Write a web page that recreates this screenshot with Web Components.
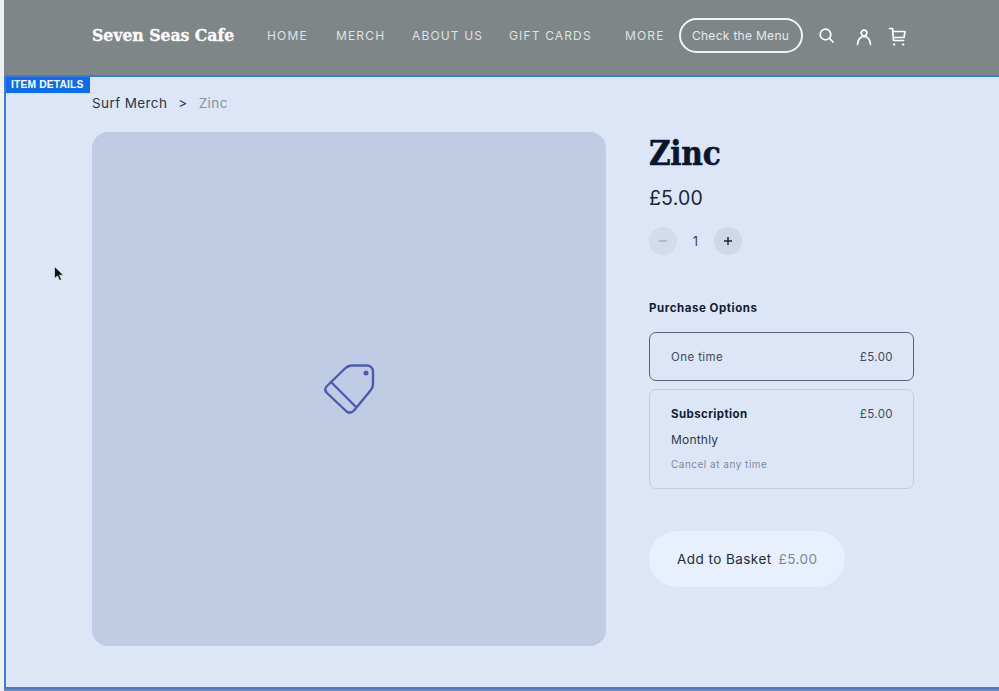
<!DOCTYPE html>
<html lang="en">
<head>
<meta charset="utf-8">
<title>Zinc</title>
<style>
html, body { margin: 0; height: 100%; background: #eef0f2; }
body { font-family: Inter, "Liberation Sans", sans-serif; overflow: hidden; }
</style>
</head>
<body>
<cafe-page>
  <cafe-header slot="header"></cafe-header>
  <item-details>
    <cafe-breadcrumb slot="crumb"></cafe-breadcrumb>
    <product-image slot="image"></product-image>
    <product-info slot="info">
      <quantity-picker slot="qty"></quantity-picker>
      <purchase-option slot="options" selected>
        <span slot="name">One time</span>
        <span slot="price">£5.00</span>
      </purchase-option>
      <purchase-option slot="options" subscription>
        <span slot="name">Subscription</span>
        <span slot="price">£5.00</span>
        <span slot="period">Monthly</span>
        <span slot="note">Cancel at any time</span>
      </purchase-option>
    </product-info>
  </item-details>
</cafe-page>
<script>
'use strict'
const define = (tag, html) => {
  const template = document.createElement('template')
  template.innerHTML = html
  customElements.define(tag, class extends HTMLElement {
    constructor() {
      super()
      this.attachShadow({mode: 'open'})
      this.shadowRoot.appendChild(template.content.cloneNode(true))
    }
  })
}

define('cafe-page', `
<style>
:host {
  display: grid;
  grid-template-rows: 75px 614px;
  height: 691px;
  padding-left: 4px;
  box-sizing: border-box;
  background: linear-gradient(#eef0f2, #eef0f2) left / 4px 100% no-repeat, #7f8688;
}
svg.cursor { position: absolute; left: 53px; top: 265px; }
</style>
<slot name="header"></slot>
<slot></slot>
<svg class="cursor" width="11" height="18" viewBox="0 0 11 18"><path d="M1.5 1.5v12l3-2.6 2 4.6 2-.9-2-4.4h4z" fill="#111" stroke="#e8eef8" stroke-width=".7"/></svg>
`)

define('cafe-header', `
<style>
:host {
  display: flex;
  align-items: center;
  padding: 0 0 4px 88px;
  background: #7f8688;
  color: #fff;
  box-sizing: border-box;
}
.logo {
  font: 700 17.5px "DejaVu Serif", "Liberation Serif", serif;
  font-stretch: condensed;
  letter-spacing: -.05px;
  -webkit-text-stroke: .3px #fff;
  width: 175px;
  margin-top: -2px;
  white-space: nowrap;
}
nav { display: flex; font-size: 12px; letter-spacing: 1.15px; color: #dde1e3; }
nav span { white-space: nowrap; }
.menu {
  margin-left: 14px;
  width: 120px;
  height: 31px;
  border: 2px solid #f2f4f5;
  border-radius: 18px;
  display: flex;
  align-items: center;
  justify-content: center;
  font-size: 12px;
  letter-spacing: .3px;
  color: #e6e9ea;
}
svg { display: block; fill: none; stroke: #fff; stroke-width: 1.7; stroke-linecap: round; stroke-linejoin: round; }
.search { margin-left: 15px; }
.user { margin-left: 20px; }
.cart { margin-left: 15px; }
</style>
<div class="logo">Seven Seas Cafe</div>
<nav>
  <span style="width:69px">HOME</span>
  <span style="width:76px">MERCH</span>
  <span style="width:97px">ABOUT US</span>
  <span style="width:116px">GIFT CARDS</span>
  <span>MORE</span>
</nav>
<div class="menu">Check the Menu</div>
<svg class="search" width="17" height="17" viewBox="0 0 17 17"><circle cx="7.5" cy="7.5" r="5.300"/><path d="M11.500 11.500 15 15"/></svg>
<svg class="user" width="18" height="20" viewBox="0 0 18 20"><circle cx="9" cy="7" r="2.800"/><path d="M2.500 18.500c.5-5 3-8 6.500-8s6 3 6.500 8"/></svg>
<svg class="cart" width="18" height="20" viewBox="0 0 18 20"><path d="M1.500 2.500h3l1 12h10"/><path d="M5 5.500h12l-1 6H5.500"/><path d="M6 18.500h.4M15 18.500h.4" stroke-width="2"/></svg>
`)

define('item-details', `
<style>
:host {
  display: block;
  position: relative;
  background: #dce6f6;
  border: 2px solid #3a7bdc;
  border-right: 0;
  box-sizing: border-box;
  color: #111c33;
}
.tag {
  position: absolute;
  left: 0;
  top: 0;
  height: 16px;
  padding: 0 5px;
  width: 84px;
  box-sizing: border-box;
  background: #0b6cf2;
  color: #fff;
  font: 700 10.300px/16px "Liberation Sans", sans-serif;
  letter-spacing: .15px;
  white-space: nowrap;
}
.wrap { padding: 16px 0 0 86px; }
.cols { display: flex; margin-top: 20px; }
</style>
<div class="tag">ITEM DETAILS</div>
<div class="wrap">
  <slot name="crumb"></slot>
  <div class="cols">
    <slot name="image"></slot>
    <slot name="info"></slot>
  </div>
</div>
`)

define('cafe-breadcrumb', `
<style>
:host { display: flex; height: 19px; align-items: center; font-size: 13.500px; letter-spacing: .4px; color: #2b3648; white-space: nowrap; }
b { font-weight: 400; margin: 0 11px; }
span { color: #8792a5; }
</style>
Surf Merch <b>&gt;</b> <span>Zinc</span>
`)

define('product-image', `
<style>
:host {
  display: flex;
  width: 514px;
  height: 514px;
  align-items: center;
  justify-content: center;
  background: #c0cce3;
  border-radius: 16px;
}
</style>
<svg width="56" height="56" viewBox="0 0 56 56" fill="none" stroke="#4c5bb0" stroke-width="2.400" stroke-linecap="round" stroke-linejoin="round">
  <path d="M30 4.500h16a6 6 0 0 1 6 6V23c0 2.500-.8 4.500-2.500 6.500L33 49.500q-4 4-8 .5L6 32q-3.500-3.500 0-7L24 7.500q2.500-2.500 6-3z"/>
  <path d="M10 21 35 46"/>
  <circle cx="45" cy="12" r="2.500" fill="#4c5bb0" stroke="none"/>
</svg>
`)

define('product-info', `
<style>
:host { display: block; margin-left: 43px; width: 265px; }
h1 { margin: 2px 0 0; font: 700 33px/40px "DejaVu Serif", "Liberation Serif", serif; font-stretch: condensed; -webkit-text-stroke: .5px #0b1530; color: #0b1530; letter-spacing: -.3px; }
.price { margin-top: 12px; font-size: 19.500px; line-height: 24px; letter-spacing: .2px; color: #1c2638; }
h2 { margin: 45px 0 0; font-size: 11.500px; line-height: 16px; font-weight: 700; letter-spacing: .55px; color: #111c33; }
.options { display: grid; gap: 8px; margin-top: 16px; }
.add {
  display: flex;
  align-items: center;
  box-sizing: border-box;
  width: 196px;
  height: 56px;
  margin-top: 42px;
  padding-left: 28px;
  border-radius: 28px;
  background: #e8f0fe;
  font-size: 13.500px;
  letter-spacing: .45px;
  color: #1f2a3c;
  white-space: nowrap;
}
.add span { margin-left: 7px; color: #7b8698; }
</style>
<h1>Zinc</h1>
<div class="price">£5.00</div>
<slot name="qty"></slot>
<h2>Purchase Options</h2>
<div class="options"><slot name="options"></slot></div>
<div class="add">Add to Basket <span>£5.00</span></div>
`)

define('quantity-picker', `
<style>
:host { display: flex; align-items: center; margin-top: 17px; height: 28px; font-size: 13px; color: #3c4658; }
.btn { width: 28px; height: 28px; border-radius: 50%; background: #ced8e8; display: flex; align-items: center; justify-content: center; }
.off { background: #d2dcec; opacity: .9; }
.n { width: 37px; text-align: center; }
svg { display: block; stroke: #1c2638; stroke-width: 1.400; }
.off svg { stroke: #9aa6b8; }
</style>
<div class="btn off"><svg width="10" height="10" viewBox="0 0 10 10"><path d="M1 5h8"/></svg></div>
<div class="n">1</div>
<div class="btn"><svg width="10" height="10" viewBox="0 0 10 10"><path d="M1 5h8M5 1v8"/></svg></div>
`)

define('purchase-option', `
<style>
:host {
  display: block;
  box-sizing: border-box;
  border: 1px solid #c2cde0;
  border-radius: 7px;
  padding: 16px 20px 17px 21px;
  font-size: 11.500px;
  letter-spacing: .4px;
  color: #3f4a5c;
}
:host([selected]) { border: 1.500px solid #566379; height: 49px; }
.row { display: flex; justify-content: space-between; line-height: 16px; }
:host([subscription]) .name { font-weight: 700; color: #111c33; }
.period { display: none; margin-top: 10px; font-size: 12px; line-height: 16px; letter-spacing: .2px; color: #2f3a4c; }
.note { display: none; margin-top: 9px; font-size: 10px; line-height: 14px; letter-spacing: .5px; color: #7f8b9e; }
:host([subscription]) .period, :host([subscription]) .note { display: block; }
</style>
<div class="row"><span class="name"><slot name="name"></slot></span><span><slot name="price"></slot></span></div>
<div class="period"><slot name="period"></slot></div>
<div class="note"><slot name="note"></slot></div>
`)
</script>
</body>
</html>
